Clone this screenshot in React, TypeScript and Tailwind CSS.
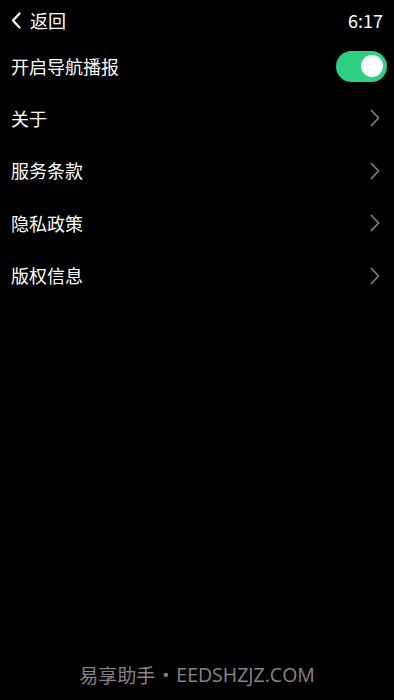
import { useState } from 'react';

const items = ['关于', '服务条款', '隐私政策', '版权信息'];

function Chevron() {
  return (
    <svg width="10" height="18" viewBox="0 0 10 18" fill="none">
      <path d="M1.5 1.5 L8.5 9 L1.5 16.5" stroke="#7d7d7d" strokeWidth="1.8" strokeLinecap="round" strokeLinejoin="round" />
    </svg>
  );
}

export default function App() {
  const [on, setOn] = useState(true);

  return (
    <div
      className="w-[394px] h-[700px] bg-black text-white flex flex-col"
      style={{ fontFamily: '"Noto Sans CJK SC", "Noto Sans", sans-serif' }}
    >
      {/* 顶部栏 */}
      <div className="h-[40px] flex items-center justify-between pl-[11px] pr-[11px]">
        <div className="flex items-center gap-[9px]">
          <svg width="10" height="17" viewBox="0 0 10 17" fill="none">
            <path d="M8.5 1.5 L2 8.5 L8.5 15.5" stroke="#fff" strokeWidth="2.2" strokeLinecap="round" strokeLinejoin="round" />
          </svg>
          <span className="text-[18px] leading-none">返回</span>
        </div>
        <span className="text-[18px] leading-none">6:17</span>
      </div>

      {/* 开关行 */}
      <div className="h-[52px] flex items-center justify-between pl-[11px] pr-[7px]">
        <span className="text-[18px]">开启导航播报</span>
        <button
          onClick={() => setOn(!on)}
          className={`w-[51px] h-[31px] rounded-full flex items-center px-[4px] ${on ? 'bg-[#2ecf83] justify-end' : 'bg-[#444] justify-start'}`}
        >
          <span className="w-[22px] h-[22px] rounded-full bg-white" />
        </button>
      </div>

      {items.map((t) => (
        <div key={t} className="h-[52.5px] flex items-center justify-between pl-[11px] pr-[14px]">
          <span className="text-[18px]">{t}</span>
          <Chevron />
        </div>
      ))}

      <div className="flex-1" />

      <div
        className="h-[38px] flex items-start justify-center gap-[7px] text-[#8b818b] leading-[26px]"
        style={{ fontFamily: '"Open Sans", "Noto Sans CJK SC", sans-serif' }}
      >
        <span className="text-[19px]" style={{ fontFamily: '"Noto Sans CJK SC", sans-serif' }}>易享助手</span>
        <span className="text-[19px]">•</span>
        <span className="text-[19.5px]">EEDSHZJZ.COM</span>
      </div>
    </div>
  );
}
